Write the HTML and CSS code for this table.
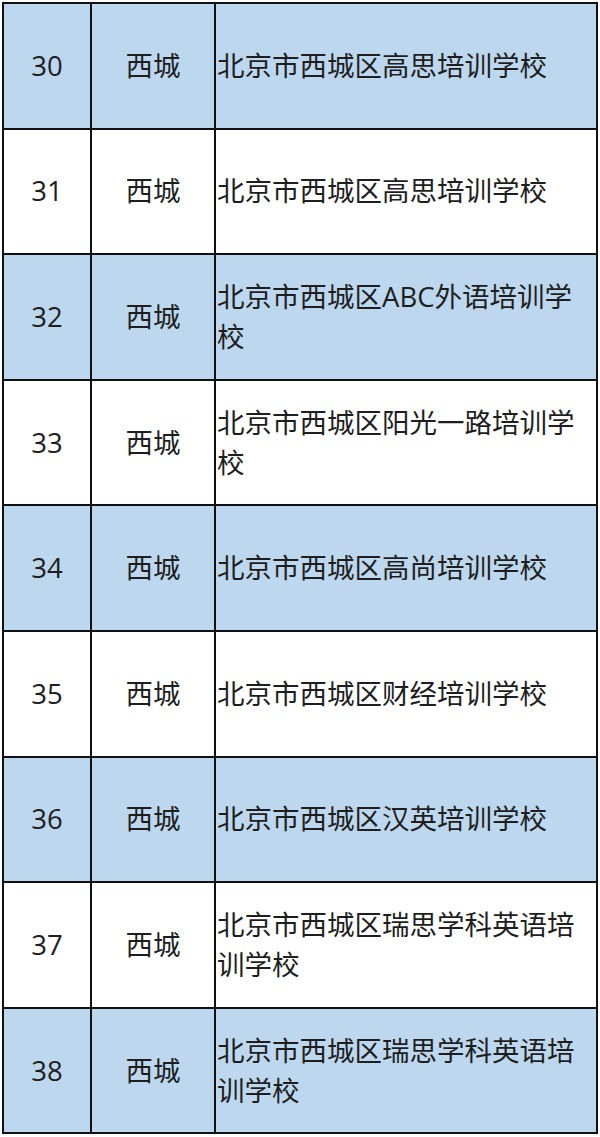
FILE: index.html
```html
<!DOCTYPE html>
<html lang="zh-CN">
<head>
<meta charset="utf-8">
<link rel="stylesheet" href="styles.css">
</head>
<body>
<table class="list">
  <tbody>
    <tr class="blue"><td class="num">30</td><td class="area">西城</td><td class="name">北京市西城区高思培训学校</td></tr>
    <tr><td class="num">31</td><td class="area">西城</td><td class="name">北京市西城区高思培训学校</td></tr>
    <tr class="blue"><td class="num">32</td><td class="area">西城</td><td class="name">北京市西城区ABC外语培训学校</td></tr>
    <tr><td class="num">33</td><td class="area">西城</td><td class="name">北京市西城区阳光一路培训学校</td></tr>
    <tr class="blue"><td class="num">34</td><td class="area">西城</td><td class="name">北京市西城区高尚培训学校</td></tr>
    <tr><td class="num">35</td><td class="area">西城</td><td class="name">北京市西城区财经培训学校</td></tr>
    <tr class="blue"><td class="num">36</td><td class="area">西城</td><td class="name">北京市西城区汉英培训学校</td></tr>
    <tr><td class="num">37</td><td class="area">西城</td><td class="name">北京市西城区瑞思学科英语培训学校</td></tr>
    <tr class="blue"><td class="num">38</td><td class="area">西城</td><td class="name">北京市西城区瑞思学科英语培训学校</td></tr>
  </tbody>
</table>
</body>
</html>
```

FILE: styles.css
```css
html, body {
  margin: 0;
  padding: 0;
  background: #ffffff;
}

.list {
  margin: 2px 0 0 2px;
  border-collapse: separate;
  border-spacing: 0;
  border-top: 2px solid #111111;
  border-left: 2px solid #111111;
  table-layout: fixed;
  width: 596px;
  font-family: "Open Sans", "Noto Sans CJK SC", sans-serif;
  font-size: 27.5px;
  line-height: 40px;
  color: #1e1e1e;
}

.list td {
  box-sizing: border-box;
  height: 125.6px;
  border-right: 2px solid #111111;
  border-bottom: 2px solid #111111;
  vertical-align: middle;
  padding: 0;
}

.list tr.blue td {
  background: #bdd7ee;
}

.num {
  width: 88px;
  text-align: center;
}

.area {
  width: 124px;
  text-align: center;
}

.name {
  width: 382px;
  text-align: left;
  padding-left: 1px !important;
  padding-right: 2px !important;
}
```
